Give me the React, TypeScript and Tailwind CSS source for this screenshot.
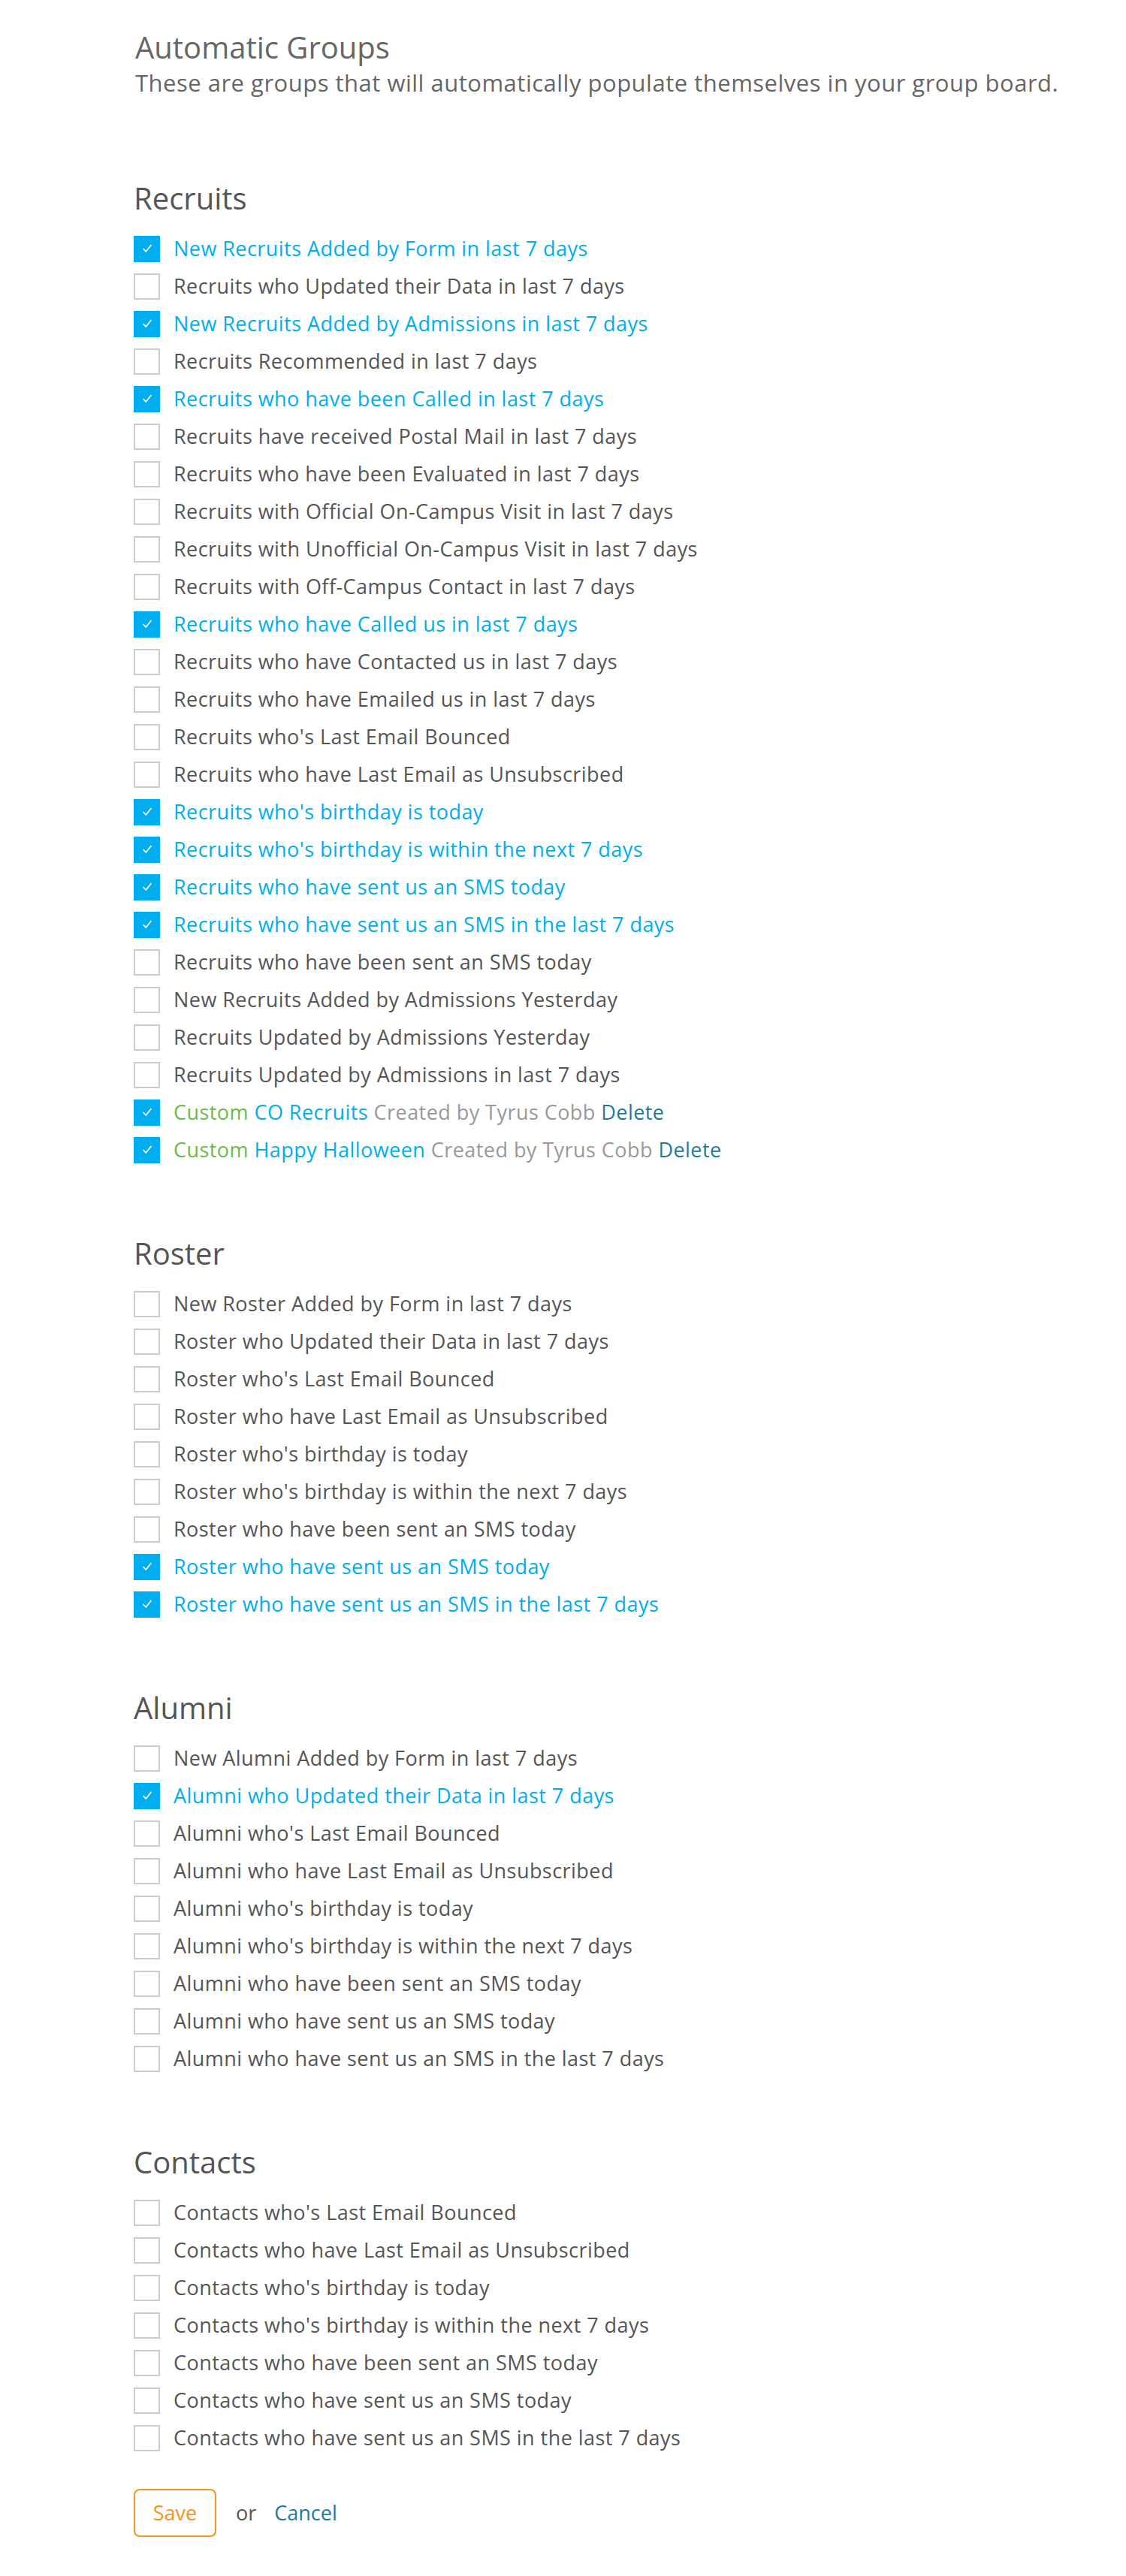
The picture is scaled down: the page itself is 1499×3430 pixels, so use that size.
import React from "react";

type Item = { label: string; checked?: boolean; custom?: { name: string } };

const recruits: Item[] = [
  { label: "New Recruits Added by Form in last 7 days", checked: true },
  { label: "Recruits who Updated their Data in last 7 days" },
  { label: "New Recruits Added by Admissions in last 7 days", checked: true },
  { label: "Recruits Recommended in last 7 days" },
  { label: "Recruits who have been Called in last 7 days", checked: true },
  { label: "Recruits have received Postal Mail in last 7 days" },
  { label: "Recruits who have been Evaluated in last 7 days" },
  { label: "Recruits with Official On-Campus Visit in last 7 days" },
  { label: "Recruits with Unofficial On-Campus Visit in last 7 days" },
  { label: "Recruits with Off-Campus Contact in last 7 days" },
  { label: "Recruits who have Called us in last 7 days", checked: true },
  { label: "Recruits who have Contacted us in last 7 days" },
  { label: "Recruits who have Emailed us in last 7 days" },
  { label: "Recruits who's Last Email Bounced" },
  { label: "Recruits who have Last Email as Unsubscribed" },
  { label: "Recruits who's birthday is today", checked: true },
  { label: "Recruits who's birthday is within the next 7 days", checked: true },
  { label: "Recruits who have sent us an SMS today", checked: true },
  { label: "Recruits who have sent us an SMS in the last 7 days", checked: true },
  { label: "Recruits who have been sent an SMS today" },
  { label: "New Recruits Added by Admissions Yesterday" },
  { label: "Recruits Updated by Admissions Yesterday" },
  { label: "Recruits Updated by Admissions in last 7 days" },
  { label: "", checked: true, custom: { name: "CO Recruits" } },
  { label: "", checked: true, custom: { name: "Happy Halloween" } },
];

const roster: Item[] = [
  { label: "New Roster Added by Form in last 7 days" },
  { label: "Roster who Updated their Data in last 7 days" },
  { label: "Roster who's Last Email Bounced" },
  { label: "Roster who have Last Email as Unsubscribed" },
  { label: "Roster who's birthday is today" },
  { label: "Roster who's birthday is within the next 7 days" },
  { label: "Roster who have been sent an SMS today" },
  { label: "Roster who have sent us an SMS today", checked: true },
  { label: "Roster who have sent us an SMS in the last 7 days", checked: true },
];

const alumni: Item[] = [
  { label: "New Alumni Added by Form in last 7 days" },
  { label: "Alumni who Updated their Data in last 7 days", checked: true },
  { label: "Alumni who's Last Email Bounced" },
  { label: "Alumni who have Last Email as Unsubscribed" },
  { label: "Alumni who's birthday is today" },
  { label: "Alumni who's birthday is within the next 7 days" },
  { label: "Alumni who have been sent an SMS today" },
  { label: "Alumni who have sent us an SMS today" },
  { label: "Alumni who have sent us an SMS in the last 7 days" },
];

const contacts: Item[] = [
  { label: "Contacts who's Last Email Bounced" },
  { label: "Contacts who have Last Email as Unsubscribed" },
  { label: "Contacts who's birthday is today" },
  { label: "Contacts who's birthday is within the next 7 days" },
  { label: "Contacts who have been sent an SMS today" },
  { label: "Contacts who have sent us an SMS today" },
  { label: "Contacts who have sent us an SMS in the last 7 days" },
];

function Box({ checked }: { checked?: boolean }) {
  if (checked) {
    return (
      <span className="flex h-[35px] w-[35px] shrink-0 items-center justify-center bg-[#00aeef]">
        <svg width="14" height="12" viewBox="0 0 14 12" fill="none">
          <path d="M2 6.5 L5.3 10 L12 1.5" stroke="#ffffff" strokeWidth="1.8" strokeLinecap="round" strokeLinejoin="round" />
        </svg>
      </span>
    );
  }
  return <span className="block h-[35px] w-[35px] shrink-0 border-2 border-[#cccccc] bg-white" />;
}

function Row({ item }: { item: Item }) {
  return (
    <div className="flex h-[50px] items-center">
      <Box checked={item.checked} />
      <div className="ml-[18px] whitespace-nowrap text-[27px] leading-[50px] tracking-[0.45px]">
        {item.custom ? (
          <>
            <span className="text-[#6cbb47]">Custom</span>{" "}
            <span className="text-[#00aeef]">{item.custom.name}</span>{" "}
            <span className="text-[#999999]">Created by Tyrus Cobb</span>{" "}
            <span className="text-[#1f7a9e]">Delete</span>
          </>
        ) : (
          <span className={item.checked ? "text-[#00aeef]" : "text-[#555555]"}>{item.label}</span>
        )}
      </div>
    </div>
  );
}

function Section({ title, items, first }: { title: string; items: Item[]; first?: boolean }) {
  return (
    <section className={first ? "mt-[112px]" : "mt-[89px]"}>
      <h2 className="mb-[18px] text-[40px] leading-[48px] font-normal text-[#555555]">{title}</h2>
      <div className="flex flex-col">
        {items.map((it, i) => (
          <Row key={i} item={it} />
        ))}
      </div>
    </section>
  );
}

export default function App() {
  return (
    <div className="min-h-[3430px] bg-white pl-[178px] pt-[39px]" style={{ fontFamily: '"Open Sans", "Noto Sans", sans-serif' }}>
      <h1 className="ml-[2px] text-[40px] leading-[48px] font-normal text-[#666666]">Automatic Groups</h1>
      <p className="ml-[2px] mt-[5px] text-[31px] leading-[36px] tracking-[0.5px] text-[#666666]">
        These are groups that will automatically populate themselves in your group board.
      </p>
      <Section title="Recruits" items={recruits} first />
      <Section title="Roster" items={roster} />
      <Section title="Alumni" items={alumni} />
      <Section title="Contacts" items={contacts} />
      <div className="mt-[43px] flex items-center">
        <button className="h-[64px] w-[110px] rounded-[8px] border-2 border-[#f7941d] bg-white text-[27px] text-[#f7941d]">
          Save
        </button>
        <span className="ml-[26px] text-[27px] text-[#555555]">or</span>
        <span className="ml-[24px] text-[27px] text-[#1f7a9e]">Cancel</span>
      </div>
    </div>
  );
}
